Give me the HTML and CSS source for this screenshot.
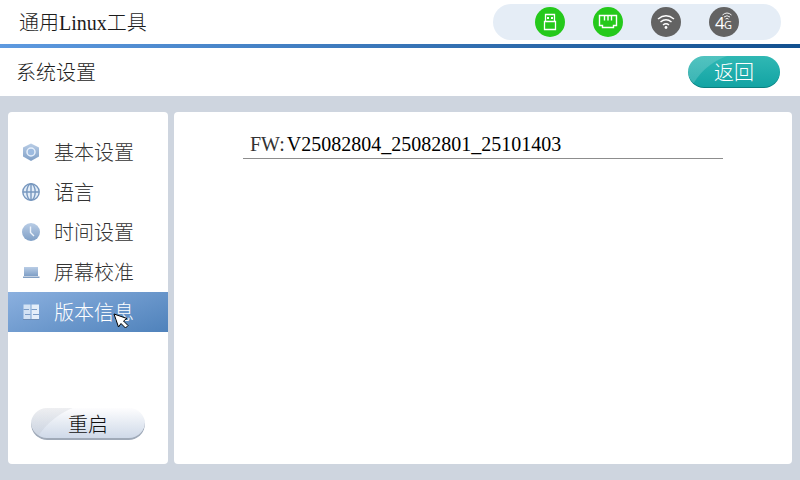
FILE: index.html
```html
<!DOCTYPE html>
<html lang="zh-CN">
<head>
  <meta charset="UTF-8">
  <meta name="viewport" content="width=device-width, initial-scale=1.0">
  <title>通用Linux工具</title>
  <link rel="stylesheet" href="styles.css">
</head>
<body>
  <header class="topbar">
    <h1>通用Linux工具</h1>
    <div class="status">
      <svg class="on" viewBox="0 0 30 30" role="img" aria-label="USB">
        <circle cx="15" cy="15" r="15"/>
        <path d="M10.500 14V7.500H19.500V14M9.500 14.500H20.500V22.500H9.500Z" stroke-width="1.300"/>
        <path d="M12 11H14M16 11H18" stroke-width="1.800"/>
      </svg>
      <svg class="on" viewBox="0 0 30 30" role="img" aria-label="Ethernet">
        <circle cx="15" cy="15" r="15"/>
        <path d="M6.500 8.500H23.500V18.500H20.500V20.500H9.500V18.500H6.500ZM11.500 9V13.500M15 9V13.500M18.500 9V13.500" stroke-width="1.400"/>
      </svg>
      <svg viewBox="0 0 30 30" role="img" aria-label="Wi-Fi">
        <circle cx="15" cy="15" r="15"/>
        <path d="M7 12Q15 5.500 23 12M9.500 15Q15 10.500 20.500 15M12 18Q15 15.500 18 18" stroke-width="1.500"/>
        <circle class="dot" cx="15" cy="20.500" r="1.400"/>
      </svg>
      <svg viewBox="0 0 30 30" role="img" aria-label="4G">
        <circle cx="15" cy="15" r="15"/>
        <text x="6" y="22" font-size="17">4</text>
        <text x="15" y="22" font-size="11">G</text>
        <path d="M13.500 8Q18 4 22.500 8M15 10Q18 7.500 21 10M16.500 12Q18 10.800 19.500 12" stroke-width="0.900"/>
      </svg>
    </div>
  </header>

  <div class="titlebar">
    <h2>系统设置</h2>
    <button type="button" class="btn btn-back">返回</button>
  </div>

  <main class="content">
    <aside class="sidebar">
      <nav class="menu">
        <a class="menu-item" href="#basic">
          <svg viewBox="0 0 20 20">
            <defs>
              <linearGradient id="blue" x1="0" y1="0" x2="0" y2="1">
                <stop offset="0" stop-color="#b9cde6"/>
                <stop offset="1" stop-color="#7f9fc6"/>
              </linearGradient>
            </defs>
            <path d="M10 1.500L18 5.500V14.500L10 19L2 14.500V5.500Z" fill="url(#blue)"/>
            <circle cx="10" cy="10" r="4" fill="#9dbbe0" stroke="#e6effa" stroke-width="1.500"/>
          </svg>
          <span>基本设置</span>
        </a>
        <a class="menu-item" href="#language">
          <svg viewBox="0 0 20 20" fill="none" stroke="#7898bf" stroke-width="1.400">
            <circle cx="10" cy="10" r="8.200" fill="#e3edf8"/>
            <ellipse cx="10" cy="10" rx="4.200" ry="8.200"/>
            <path d="M10 2V18M2 10H18"/>
          </svg>
          <span>语言</span>
        </a>
        <a class="menu-item" href="#time">
          <svg viewBox="0 0 20 20">
            <circle cx="10" cy="10" r="9" fill="url(#blue)"/>
            <path d="M9.500 4.500V10.500L13 14" fill="none" stroke="#eef4fb" stroke-width="1.400"/>
          </svg>
          <span>时间设置</span>
        </a>
        <a class="menu-item" href="#screen">
          <svg viewBox="0 0 20 20">
            <path d="M3 5H17V14H3Z" fill="url(#blue)"/>
            <path d="M2 14.500H18.500V16H2Z" fill="#829fc3"/>
          </svg>
          <span>屏幕校准</span>
        </a>
        <a class="menu-item active" href="#version" aria-current="page">
          <svg viewBox="0 0 20 20">
            <path d="M2.500 2.500H9.500V17H2.500Z" fill="#d3e2f4"/>
            <path d="M10.500 2.500H18V17H10.500Z" fill="#e4eef9"/>
            <path d="M2.500 7.500H8M4 12.500H9.500M10.500 7.500H16M12 12.500H18" fill="none" stroke="#7b9cc6"/>
            <path d="M2 17.500H18.500" stroke="#6d8db5"/>
          </svg>
          <span>版本信息</span>
          <svg class="cursor" viewBox="0 0 16 16" aria-hidden="true">
            <path d="M1 1L14 5.500L10.500 8L15 12.500L12.500 15L8 10.500L5.500 14Z"/>
          </svg>
        </a>
      </nav>
      <button type="button" class="btn btn-restart">重启</button>
    </aside>

    <section class="panel">
      <dl class="version">
        <dt>FW:</dt>
        <dd>V25082804_25082801_25101403</dd>
      </dl>
    </section>
  </main>
</body>
</html>
```

FILE: styles.css
```css
* {
  box-sizing: border-box;
}
body {
  margin: 0;
  min-height: 100vh;
  display: flex;
  flex-direction: column;
  background: #ced5df;
  color: #1c1c1c;
  font-family: "Liberation Serif", "Noto Sans CJK SC", serif;
  font-size: 20px;
  font-weight: 300;
  line-height: 24px;
}
h1, h2, dl, dd {
  margin: 0;
  font-size: 20px;
  font-weight: 300;
}
h1, h2, .menu-item span {
  padding-top: 2px;
}

/* top bar */
.topbar {
  display: flex;
  align-items: center;
  justify-content: space-between;
  height: 48px;
  padding: 0 19px;
  background: #fff;
  border-bottom: 4px solid;
  border-image: linear-gradient(to right, #5e9ae0, #12508f) 1;
}
.status {
  display: flex;
  align-items: center;
  gap: 28px;
  height: 36px;
  padding: 0 42px;
  border-radius: 18px;
  background: #e5edf6;
}
.status svg {
  width: 30px;
  height: 30px;
  fill: #636363;
}
.status .on {
  fill: #25c91b;
}
.status path {
  fill: none;
  stroke: #fff;
}
.status text,
.status .dot {
  fill: #fff;
  font-family: "Open Sans", sans-serif;
  font-weight: 400;
}

/* page title */
.titlebar {
  display: flex;
  align-items: center;
  justify-content: space-between;
  height: 48px;
  padding: 0 20px 0 16px;
  background: #fff;
}
.btn {
  height: 32px;
  padding: 2px 0 0;
  border: 0;
  border-radius: 16px;
  font: inherit;
  cursor: pointer;
}
.btn-back {
  width: 92px;
  color: #fff;
  background:
    radial-gradient(circle at 60px 60px, transparent 63px, rgba(255, 255, 255, 0.16) 64px),
    linear-gradient(#30b8b4, #12a3a3);
  background-size: 46px 100%, 100% 100%;
  background-repeat: no-repeat;
  box-shadow: inset 0 -1px #0a8080;
}

/* content */
.content {
  flex: 1;
  display: flex;
  gap: 6px;
  padding: 16px 8px;
}
.sidebar,
.panel {
  background: #fff;
  border-radius: 4px;
}
.sidebar {
  width: 160px;
  display: flex;
  flex-direction: column;
  justify-content: space-between;
  align-items: center;
  padding: 20px 0 24px;
}
.menu {
  width: 100%;
}
.menu-item {
  position: relative;
  display: flex;
  align-items: center;
  gap: 13px;
  height: 40px;
  padding: 0 13px;
  color: #333;
  text-decoration: none;
}
.menu-item svg {
  width: 20px;
  height: 20px;
}
.menu-item.active {
  color: #fff;
  background: linear-gradient(160deg, #8bb0df, #4f82bb);
}
.menu-item .cursor {
  position: absolute;
  top: 21px;
  left: 105px;
  width: 16px;
  height: 16px;
  fill: #fff;
  stroke: #000;
}
.btn-restart {
  width: 114px;
  color: #111;
  background:
    radial-gradient(circle at 70px 70px, transparent 75px, rgba(160, 165, 175, 0.16) 76px),
    linear-gradient(#fdfdfe, #ccd7e7);
  background-size: 46px 100%, 100% 100%;
  background-repeat: no-repeat;
  box-shadow: inset 0 -2px #a0aab8;
}
.panel {
  flex: 1;
  padding: 20px 69px;
}
.version {
  display: flex;
  gap: 2px;
  padding: 0 7px 2px;
  border-bottom: 1px solid #8d8d8d;
}
.version dt {
  color: #333;
}
.version dd {
  color: #000;
}
```
